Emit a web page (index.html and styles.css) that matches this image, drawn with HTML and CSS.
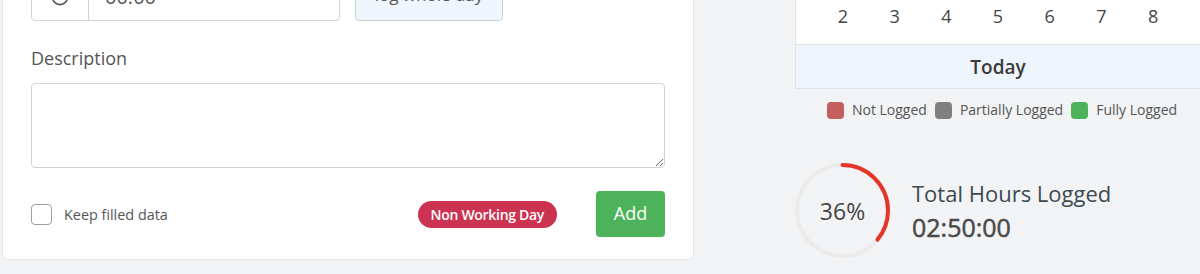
FILE: index.html
```html
<!DOCTYPE html>
<html lang="en">
<head>
<meta charset="utf-8">
<title>Time log</title>
<link rel="stylesheet" href="styles.css">
</head>
<body>
<div class="page">
  <section class="entry-card">
    <div class="time-row">
      <div class="time-group">
        <span class="time-addon">
          <svg class="clock" width="18" height="18" viewBox="0 0 18 18" fill="none" stroke="#555" stroke-width="1.6"><circle cx="9" cy="9" r="7.6"/><path d="M9 4.5V9l3 2"/></svg>
        </span>
        <input class="time-input" type="text" value="00:00">
      </div>
      <button class="btn-whole-day" type="button">log whole day</button>
    </div>
    <label class="field-label" for="desc">Description</label>
    <textarea id="desc" class="desc-input"></textarea>
    <div class="actions-row">
      <label class="keep">
        <span class="checkbox"></span>
        <span class="keep-text">Keep filled data</span>
      </label>
      <span class="badge-nonwork">Non Working Day</span>
      <button class="btn-add" type="button">Add</button>
    </div>
  </section>

  <aside class="side">
    <div class="calendar">
      <div class="week-row">
        <span>2</span><span>3</span><span>4</span><span>5</span><span>6</span><span>7</span><span>8</span>
      </div>
      <div class="today-row">Today</div>
    </div>
    <div class="legend">
      <span class="legend-item"><span class="sw sw-red"></span>Not Logged</span>
      <span class="legend-item"><span class="sw sw-gray"></span>Partially Logged</span>
      <span class="legend-item"><span class="sw sw-green"></span>Fully Logged</span>
    </div>
    <div class="progress">
      <div class="ring">
        <svg width="95" height="95" viewBox="0 0 95 95">
          <circle cx="47.5" cy="47.5" r="45.5" fill="none" stroke="#ebebeb" stroke-width="4"/>
          <circle cx="47.5" cy="47.5" r="45.5" fill="none" stroke="#e5352a" stroke-width="4" stroke-linecap="round" stroke-dasharray="102.9 300" transform="rotate(-90 47.5 47.5)"/>
        </svg>
        <span class="ring-label">36%</span>
      </div>
      <div class="totals">
        <div class="totals-title">Total Hours Logged</div>
        <div class="totals-value">02:50:00</div>
      </div>
    </div>
  </aside>
</div>
</body>
</html>
```

FILE: styles.css
```css
* { box-sizing: border-box; }
html, body { margin: 0; padding: 0; }
body {
  background: #f2f3f5;
  font-family: "Open Sans", "DejaVu Sans", sans-serif;
  color: #555;
  overflow: hidden;
  width: 1200px;
  height: 274px;
}
.page {
  display: flex;
  align-items: flex-start;
  gap: 101px;
  margin-top: -45px;
  padding-left: 2px;
}
.entry-card {
  width: 692px;
  flex: none;
  background: #fff;
  border: 1px solid #e3e6e9;
  border-radius: 6px;
  padding: 20px 28px 22px;
  display: flex;
  flex-direction: column;
}
.time-row {
  display: flex;
  gap: 15px;
}
.time-group {
  display: flex;
  width: 309px;
  height: 45px;
  border: 1px solid #cfd4da;
  border-radius: 4px;
  background: #fff;
}
.time-addon {
  width: 57px;
  flex: none;
  border-right: 1px solid #cfd4da;
  display: flex;
  align-items: center;
  justify-content: center;
  padding-bottom: 4px;
}
.time-input {
  flex: 1;
  min-width: 0;
  border: 0;
  outline: 0;
  background: transparent;
  font: 400 20px "Open Sans", sans-serif;
  color: #555;
  padding: 0 0 4px 16px;
}
.btn-whole-day {
  width: 148px;
  height: 45px;
  border: 1px solid #c8d3de;
  border-radius: 4px;
  background: #eef5fc;
  color: #555;
  font: 400 17px "Open Sans", sans-serif;
  padding: 0 0 8px;
}
.field-label {
  margin-top: 25px;
  font-size: 18px;
  line-height: 25px;
  color: #555;
}
.desc-input {
  margin-top: 12px;
  width: 634px;
  height: 85px;
  border: 1px solid #cfd4da;
  border-radius: 4px;
  font: 400 15px "Open Sans", sans-serif;
  display: block;
  resize: vertical;
}
.actions-row {
  margin-top: 23px;
  display: flex;
  align-items: center;
  height: 46px;
}
.keep {
  display: flex;
  align-items: center;
  gap: 12px;
}
.checkbox {
  width: 21px;
  height: 21px;
  border: 1.5px solid #9e9e9e;
  border-radius: 4px;
  background: #fff;
}
.keep-text {
  font-size: 14.4px;
  color: #555;
}
.badge-nonwork {
  margin-left: auto;
  height: 27px;
  padding: 0 13px;
  border-radius: 14px;
  background: #cb3351;
  color: #fff;
  font-size: 14px;
  font-weight: 600;
  display: flex;
  align-items: center;
  letter-spacing: -0.3px;
}
.btn-add {
  margin-left: 39px;
  width: 69px;
  height: 46px;
  border: 0;
  border-radius: 4px;
  background: #4db35b;
  color: #fff;
  font: 400 18px "Open Sans", sans-serif;
  padding: 0 0 2px;
}

/* right side */
.side {
  width: 405px;
  flex: none;
  display: flex;
  flex-direction: column;
}
.calendar {
  background: #fff;
  border-left: 1px solid #dfe3e7;
  border-bottom: 1px solid #dfe3e7;
}
.week-row {
  margin-top: 32px;
  height: 58px;
  display: grid;
  grid-template-columns: repeat(7, 1fr);
  padding: 0 21px;
  align-items: center;
  border-bottom: 1px solid #e1e5e9;
  font-size: 18px;
  color: #444;
  text-align: center;
}
.today-row {
  height: 43px;
  padding-top: 1px;
  background: #eef5fc;
  display: flex;
  align-items: center;
  justify-content: center;
  font-size: 19px;
  font-weight: 600;
  color: #3b3b3b;
}
.legend {
  margin-top: 12px;
  display: flex;
  justify-content: center;
  gap: 8px;
  padding-left: 9px;
  font-size: 14px;
  line-height: 18px;
  color: #555;
}
.legend-item {
  display: flex;
  align-items: center;
  gap: 8px;
}
.sw {
  width: 17px;
  height: 17px;
  border-radius: 4px;
}
.sw-red { background: #c3605f; }
.sw-gray { background: #808080; }
.sw-green { background: #4db35b; }
.progress {
  margin-top: 44px;
  display: flex;
  align-items: center;
  gap: 22px;
}
.ring {
  display: grid;
  width: 95px;
  height: 95px;
}
.ring > svg, .ring > .ring-label {
  grid-area: 1 / 1;
}
.ring-label {
  align-self: center;
  justify-self: center;
  font-size: 23px;
  color: #444;
  padding-top: 1px;
}
.totals {
  display: flex;
  flex-direction: column;
  gap: 3px;
}
.totals-title {
  font-size: 22px;
  line-height: 30px;
  color: #3d4a51;
}
.totals-value {
  font-size: 25px;
  line-height: 32px;
  font-weight: 400;
  -webkit-text-stroke: 0.5px #4a4a4a;
  color: #4a4a4a;
}
```
